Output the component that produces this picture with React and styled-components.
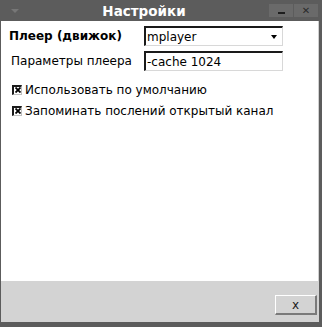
import React from "react";
import styled, { createGlobalStyle } from "styled-components";

const Global = createGlobalStyle`
  html, body { margin: 0; padding: 0; }
  body { width: 322px; height: 327px; overflow: hidden; background: #5c5c5c; font-family: "DejaVu Sans", sans-serif; }
`;

const Frame = styled.div`
  width: 322px;
  height: 327px;
  box-sizing: border-box;
  display: flex;
  flex-direction: column;
  background: #5c5c5c;
  padding: 0 3px 5px 1px;
`;

const TitleBar = styled.div`
  height: 21px;
  display: flex;
  align-items: center;
  margin-right: -3px;
  margin-left: -1px;
`;

const MenuArrow = styled.div`
  width: 0;
  height: 0;
  margin-left: 11px;
  border-left: 4px solid transparent;
  border-right: 4px solid transparent;
  border-top: 4px solid #777;
`;

const Title = styled.div`
  flex: 1;
  text-align: center;
  color: #ffffff;
  font-weight: bold;
  font-size: 13.5px;
`;

const TitleButtons = styled.div`
  display: flex;
  gap: 1px;
  margin-right: 4px;
`;

const TitleButton = styled.div`
  width: 24px;
  height: 13px;
  background: #6a6a6a;
  display: flex;
  align-items: center;
  justify-content: center;
  color: #2a2a2a;
  font-size: 10px;
`;

const MinBar = styled.div`
  width: 7px;
  height: 2px;
  background: #1e1e1e;
  margin-top: 4px;
`;

const Content = styled.div`
  flex: 1;
  background: #ffffff;
  padding: 5px 0 0 8px;
  display: flex;
  flex-direction: column;
  border-right: 1px solid #d0d0d0;
`;

const Row = styled.div`
  display: flex;
  align-items: center;
  height: 20px;
  margin-bottom: ${(p) => p.$mb || 0}px;
`;

const Label = styled.div`
  width: 135px;
  font-size: 12px;
  color: #000;
  font-weight: ${(p) => (p.$bold ? "bold" : "normal")};
  padding-left: ${(p) => p.$pl || 0}px;
  box-sizing: border-box;
`;

const Sunken = styled.div`
  width: 139px;
  height: 20px;
  box-sizing: border-box;
  border-top: 2px solid #1a1a1a;
  border-left: 2px solid #1a1a1a;
  border-bottom: 1px solid #d8d8d8;
  border-right: 1px solid #d8d8d8;
  display: flex;
  align-items: center;
  font-size: 12px;
  color: #000;
  padding-left: 1px;
`;

const Value = styled.div`
  flex: 1;
`;

const DropArrow = styled.div`
  width: 0;
  height: 0;
  border-left: 3.5px solid transparent;
  border-right: 3.5px solid transparent;
  border-top: 4px solid #000;
  margin-right: 5px;
  margin-top: 1px;
`;

const Checks = styled.div`
  display: flex;
  flex-direction: column;
  margin-top: 2px;
`;

const CheckRow = styled.div`
  display: flex;
  align-items: center;
  height: 21px;
  padding-left: 3px;
  font-size: 12px;
  color: #000;
`;

const Box = styled.div`
  width: 10px;
  height: 10px;
  box-sizing: border-box;
  border-top: 2px solid #1a1a1a;
  border-left: 2px solid #1a1a1a;
  border-right: 1px solid #c0c0c0;
  border-bottom: 1px solid #c0c0c0;
  margin-right: 3px;
  display: flex;
  align-items: center;
  justify-content: center;
`;

const Footer = styled.div`
  height: 41px;
  background: #d3d3d3;
  display: flex;
  justify-content: flex-end;
  align-items: flex-start;
  padding: 14px 2px 0 0;
  box-sizing: border-box;
`;

const Button = styled.div`
  width: 42px;
  height: 20px;
  box-sizing: border-box;
  border-top: 1px solid #ffffff;
  border-left: 1px solid #ffffff;
  border-right: 2px solid #7a7a7a;
  border-bottom: 2px solid #7a7a7a;
  display: flex;
  align-items: center;
  justify-content: center;
  font-size: 12px;
  color: #1a1a1a;
`;

const Check = () => (
  <Box>
    <svg width="6" height="6" viewBox="0 0 6 6">
      <path d="M0.5 0.5 L5.5 5.5 M5.5 0.5 L0.5 5.5" stroke="#000" strokeWidth="1.8" />
    </svg>
  </Box>
);

export default function App() {
  return (
    <>
      <Global />
      <Frame>
        <TitleBar>
          <MenuArrow />
          <Title>Настройки</Title>
          <TitleButtons>
            <TitleButton><MinBar /></TitleButton>
            <TitleButton>✕</TitleButton>
          </TitleButtons>
        </TitleBar>
        <Content>
          <Row $mb={5}>
            <Label $bold>Плеер (движок)</Label>
            <Sunken>
              <Value>mplayer</Value>
              <DropArrow />
            </Sunken>
          </Row>
          <Row $mb={6}>
            <Label $pl={2}>Параметры плеера</Label>
            <Sunken>
              <Value>-cache 1024</Value>
            </Sunken>
          </Row>
          <Checks>
            <CheckRow>
              <Check />
              Использовать по умолчанию
            </CheckRow>
            <CheckRow>
              <Check />
              Запоминать послений открытый канал
            </CheckRow>
          </Checks>
        </Content>
        <Footer>
          <Button>x</Button>
        </Footer>
      </Frame>
    </>
  );
}
